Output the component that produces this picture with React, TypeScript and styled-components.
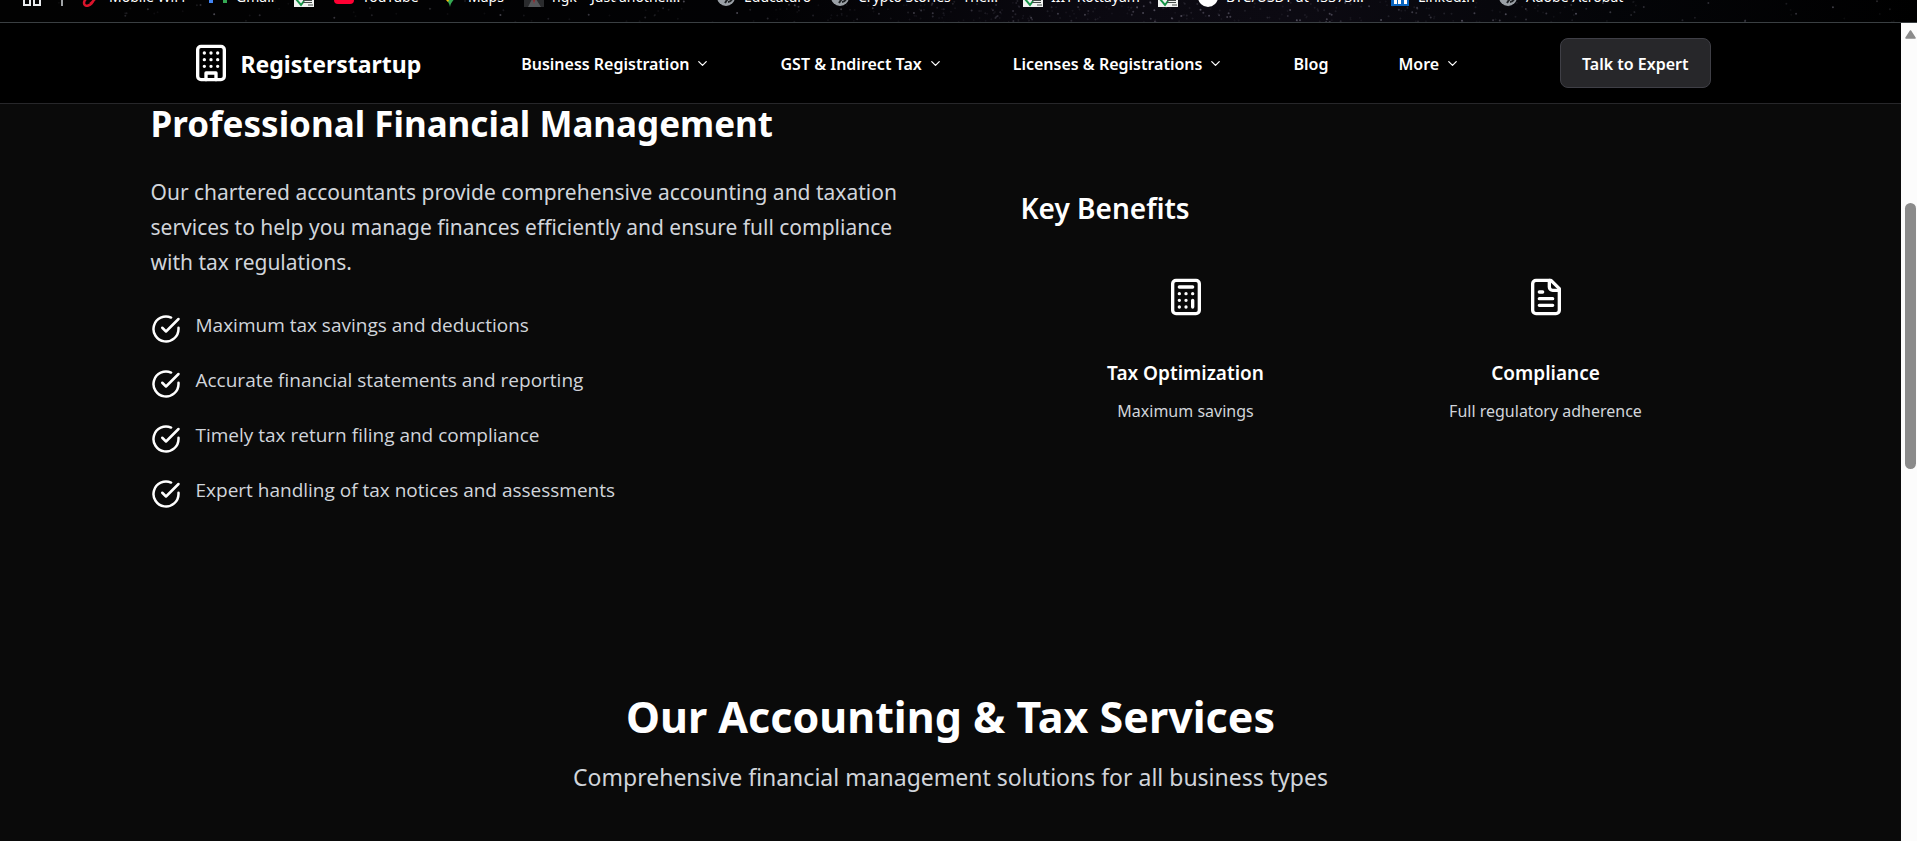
import React from 'react';
import styled, { createGlobalStyle } from 'styled-components';

const GlobalStyle = createGlobalStyle`
  *, *::before, *::after { box-sizing: border-box; }
  html, body { margin: 0; padding: 0; background: #000; }
  body { font-family: "Noto Sans", "Open Sans", sans-serif; color: #fff; overflow: hidden; }
  h1, h2, h3, h4, p, ul { margin: 0; padding: 0; }
  ul { list-style: none; }
  a { color: inherit; text-decoration: none; }
  button { font: inherit; color: inherit; cursor: pointer; }
  svg { display: block; flex: none; }
`;

const Window = styled.div`
  display: flex;
  flex-direction: column;
  height: 100vh;
`;

/* Browser bookmarks strip */
const BookmarksBar = styled.nav`
  position: relative;
  flex: none;
  height: 23px;
  overflow: hidden;
  background: linear-gradient(90deg, #020202 0%, #020204 40%, #0b0911 58%, #0c0a12 68%, #040508 84%, #000 100%);
  border-bottom: 1px solid #3a3f42;
`;

const Starfield = styled.svg`
  position: absolute;
  inset: 0;
  width: 100%;
  height: 100%;
`;

const BookmarkRow = styled.div`
  position: relative;
  display: flex;
  align-items: center;
  height: 20px;
  margin-top: -13px;
  padding-left: 22px;
  font-size: 14px;
  line-height: 20px;
  white-space: nowrap;
`;

const AppsItem = styled.a`
  flex: none;
  width: 39px;
`;

const BarDivider = styled.span`
  flex: none;
  width: 2px;
  height: 18px;
  margin-right: 18px;
  background: #a0a3a6;
`;

const Bookmark = styled.a<{ $width: number }>`
  display: flex;
  align-items: center;
  gap: 8px;
  flex: 0 0 ${(p) => p.$width}px;
`;

/* Page viewport */
const Viewport = styled.div`
  display: flex;
  flex: 1;
  min-height: 0;
`;

const Page = styled.div`
  flex: 1;
  min-width: 0;
  overflow: hidden;
  background: #0a0a0a;
`;

const Header = styled.header`
  background: #000;
  border-bottom: 1px solid #27272a;
`;

const HeaderInner = styled.div`
  display: flex;
  align-items: center;
  justify-content: space-between;
  max-width: 1600px;
  height: 80px;
  margin: 0 auto;
  padding: 0 40px;
`;

const Brand = styled.a`
  display: flex;
  align-items: center;
  gap: 10px;
  font-size: 23px;
  line-height: 35px;
  font-weight: 700;
`;

const BrandName = styled.span`
  padding-top: 3px;
`;

const Menu = styled.nav`
  display: flex;
  align-items: center;
  gap: 70px;
`;

const MenuLabel = styled.span`
  display: block;
  padding-top: 2px;
  font-size: 16px;
  line-height: 24px;
  font-weight: 600;
`;

const MenuButton = styled.button`
  display: flex;
  align-items: center;
  gap: 6px;
  padding: 0;
  border: 0;
  background: none;
`;

const ExpertButton = styled.button`
  height: 50px;
  padding: 0 21px;
  border: 1px solid #3f3f46;
  border-radius: 8px;
  background: #27272a;
`;

const Container = styled.div`
  max-width: 1600px;
  margin: 0 auto;
`;

const Overview = styled(Container)`
  display: grid;
  grid-template-columns: 1fr 1fr;
  gap: 60px;
`;

const Intro = styled.section`
  display: flex;
  flex-direction: column;
`;

const Title = styled.h2`
  font-size: 35px;
  line-height: 40px;
  font-weight: 700;
`;

const Lead = styled.p`
  margin-top: 31px;
  color: #d1d5db;
  font-size: 21px;
  line-height: 35px;
`;

const CheckList = styled.ul`
  display: flex;
  flex-direction: column;
  gap: 21px;
  margin-top: 30px;
`;

const CheckItem = styled.li`
  display: flex;
  align-items: flex-start;
  gap: 15px;
  color: #d1d5db;
  font-family: "Open Sans", "Noto Sans", sans-serif;
  font-size: 19px;
  line-height: 30px;

  svg { margin-top: 4px; color: #fff; }
`;

const Benefits = styled.section`
  padding: 84px 40px 0;
`;

const BenefitsTitle = styled.h3`
  font-size: 28px;
  line-height: 40px;
  font-weight: 600;
`;

const BenefitGrid = styled.div`
  display: grid;
  grid-template-columns: 1fr 1fr;
  gap: 30px;
  margin-top: 29px;
`;

const BenefitCard = styled.article`
  display: flex;
  flex-direction: column;
  align-items: center;
  padding: 20px;
  text-align: center;
`;

const BenefitName = styled.h4`
  margin-top: 39px;
  font-size: 19px;
  line-height: 35px;
  font-weight: 600;
`;

const BenefitNote = styled.p`
  margin-top: 5px;
  color: #d1d5db;
  font-size: 16px;
  line-height: 30px;
`;

const Services = styled(Container)`
  margin-top: 180px;
  text-align: center;
`;

const ServicesTitle = styled.h2`
  font-size: 43px;
  line-height: 55px;
  font-weight: 700;
`;

const ServicesNote = styled.p`
  margin-top: 16px;
  color: #d1d5db;
  font-size: 23px;
  line-height: 35px;
`;

/* Scrollbar */
const ScrollTrack = styled.div`
  display: flex;
  flex-direction: column;
  flex: none;
  width: 16px;
  padding: 7px 1px 0 4px;
  background: #fcfcfc;
`;

const ScrollThumb = styled.div`
  width: 11px;
  height: 40%;
  max-height: 266px;
  margin-top: 164px;
  border-radius: 6px;
  background: #8b8b8b;
`;

type LineIconProps = { size: number; children: React.ReactNode };

const LineIcon = ({ size, children }: LineIconProps) => (
  <svg width={size} height={size} viewBox="0 0 24 24" fill="none" stroke="currentColor" strokeWidth="2" strokeLinecap="round" strokeLinejoin="round" aria-hidden="true">
    {children}
  </svg>
);

const BuildingIcon = () => (
  <LineIcon size={40}>
    <rect width="16" height="20" x="4" y="2" rx="2" />
    <path d="M9 22v-4h6v4M8 6h.01M16 6h.01M12 6h.01M12 10h.01M12 14h.01M16 10h.01M16 14h.01M8 10h.01M8 14h.01" />
  </LineIcon>
);

const ChevronIcon = () => (
  <LineIcon size={15}>
    <path d="m6 9 6 6 6-6" />
  </LineIcon>
);

const CheckIcon = () => (
  <LineIcon size={30}>
    <path d="M22 11.08V12a10 10 0 1 1-5.93-9.14" />
    <path d="m9 11 3 3L22 4" />
  </LineIcon>
);

const CalculatorIcon = () => (
  <LineIcon size={40}>
    <rect width="16" height="20" x="4" y="2" rx="2" />
    <path d="M8 6h8M16 14v4M16 10h.01M12 10h.01M8 10h.01M12 14h.01M8 14h.01M12 18h.01M8 18h.01" />
  </LineIcon>
);

const DocumentIcon = () => (
  <LineIcon size={40}>
    <path d="M15 2H6a2 2 0 0 0-2 2v16a2 2 0 0 0 2 2h12a2 2 0 0 0 2-2V7Z" />
    <path d="M14 2v4a2 2 0 0 0 2 2h4M10 9H8M16 13H8M16 17H8" />
  </LineIcon>
);

const favicons: Record<string, React.ReactNode> = {
  scribble: <path d="M16 9c-5-3-13 3-13 7 0 5 8 3 10-4M9 17c4-3 5-6 8-8" fill="none" stroke="#d9142b" strokeWidth="2.500" />,
  gmail: (
    <>
      <path d="M1 3h4v13H1z" fill="#4285f4" />
      <path d="M15 3h4v13h-4z" fill="#34a853" />
      <path d="M1 3l9 5 9-5v3l-9 6-9-6z" fill="#ea4335" />
    </>
  ),
  crest: (
    <>
      <path d="M0 0h20v20H0z" fill="#f1f3f1" />
      <path d="M2 12l5 6 3-4" fill="none" stroke="#159447" strokeWidth="2" />
      <path d="M9 13.500h9M9 15.500h9M14 18h5" stroke="#444b48" strokeWidth="1" />
    </>
  ),
  youtube: <rect y="2" width="20" height="15" rx="4" fill="#ff0033" />,
  maps: (
    <>
      <path d="M3 6a7 7 0 0 1 14 0c0 6-6 7-7 14-1-7-7-8-7-14" fill="#34a853" />
      <path d="M3 10l5 5 3-6z" fill="#fbbc04" />
    </>
  ),
  portrait: (
    <>
      <path d="M0 0h20v20H0z" fill="#2a2b2d" />
      <path d="M4 20l4-8 2 3 2-3 5 8" fill="#55575a" />
      <path d="M9 12h2l-1 5z" fill="#b3262d" />
    </>
  ),
  globe: (
    <>
      <circle cx="10" cy="10" r="9" fill="#9aa0a6" />
      <path d="M4 8c1 3 5 3 7 5l-2 3M12 15c2 0 4-2 5-5" fill="none" stroke="#202326" strokeWidth="2" />
    </>
  ),
  disc: <circle cx="10" cy="10" r="10" fill="#fff" />,
  linkedin: (
    <>
      <rect x="1" y="1" width="18" height="18" fill="#0a66c2" />
      <path d="M5.500 8v9M9.500 8v9M9.500 12c1-4 6-4 6 0v5" fill="none" stroke="#fff" strokeWidth="3" />
    </>
  ),
};

const bookmarks: { icon: string; label?: string; title?: string; width: number }[] = [
  { icon: 'scribble', label: 'Mobile WiFi', width: 127 },
  { icon: 'gmail', label: 'Gmail', width: 86 },
  { icon: 'crest', title: 'Institute portal', width: 40 },
  { icon: 'youtube', label: 'YouTube', width: 106 },
  { icon: 'maps', label: 'Maps', width: 84 },
  { icon: 'portrait', label: 'ngk – Just another...', width: 192 },
  { icon: 'globe', label: 'Educaturo', width: 114 },
  { icon: 'globe', label: 'Crypto Stories - The...', width: 193 },
  { icon: 'crest', label: 'IIIT Kottayam', width: 135 },
  { icon: 'crest', title: 'Institute portal', width: 40 },
  { icon: 'disc', label: 'BTC/USDT at 43373...', width: 192 },
  { icon: 'linkedin', label: 'LinkedIn', width: 108 },
  { icon: 'globe', label: 'Adobe Acrobat', width: 130 },
];

// Pseudo-random, but the same stars on every render.
const stars = Array.from({ length: 420 }, (_, i) => {
  const rand = (n: number) => {
    const v = Math.sin(i * 12.9898 + n * 78.233) * 43758.5453;
    return v - Math.floor(v);
  };
  const spread = i % 3 === 0 ? rand(1) : 0.5 + (rand(1) + rand(4) - 1) * 0.3 + 0.1;
  return { x: spread * 100, y: rand(2) * 22, alpha: 0.06 + rand(3) ** 4 * 0.3 };
});

const menu = [
  { label: 'Business Registration', dropdown: true },
  { label: 'GST & Indirect Tax', dropdown: true },
  { label: 'Licenses & Registrations', dropdown: true },
  { label: 'Blog', dropdown: false },
  { label: 'More', dropdown: true },
];

const points = [
  'Maximum tax savings and deductions',
  'Accurate financial statements and reporting',
  'Timely tax return filing and compliance',
  'Expert handling of tax notices and assessments',
];

const benefits = [
  { name: 'Tax Optimization', note: 'Maximum savings', icon: <CalculatorIcon /> },
  { name: 'Compliance', note: 'Full regulatory adherence', icon: <DocumentIcon /> },
];

export default function App() {
  return (
    <Window>
      <GlobalStyle />
      <BookmarksBar aria-label="Bookmarks">
        <Starfield aria-hidden="true">
          {stars.map((s, i) => (
            <rect key={i} x={`${s.x}%`} y={s.y} width="2" height="2" rx="1" fill="#c9c4dc" opacity={s.alpha} />
          ))}
        </Starfield>
        <BookmarkRow>
          <AppsItem href="#" aria-label="Apps">
            <svg width="20" height="20" viewBox="0 0 20 20" fill="none" stroke="#e8eaed" strokeWidth="2" aria-hidden="true">
              <path d="M2 2h6v6H2zM12 2h6v6h-6zM2 12h6v6H2zM12 12h6v6h-6z" />
            </svg>
          </AppsItem>
          <BarDivider />
          {bookmarks.map((b, i) => (
            <Bookmark key={i} href="#" $width={b.width} aria-label={b.label ?? b.title}>
              <svg width="20" height="20" viewBox="0 0 20 20" aria-hidden="true">{favicons[b.icon]}</svg>
              {b.label}
            </Bookmark>
          ))}
        </BookmarkRow>
      </BookmarksBar>

      <Viewport>
        <Page>
          <Header>
            <HeaderInner>
              <Brand href="#">
                <BuildingIcon />
                <BrandName>Registerstartup</BrandName>
              </Brand>
              <Menu aria-label="Main">
                {menu.map((m) =>
                  m.dropdown ? (
                    <MenuButton key={m.label} type="button" aria-haspopup="true">
                      <MenuLabel>{m.label}</MenuLabel>
                      <ChevronIcon />
                    </MenuButton>
                  ) : (
                    <a key={m.label} href="#">
                      <MenuLabel>{m.label}</MenuLabel>
                    </a>
                  ),
                )}
              </Menu>
              <ExpertButton type="button">
                <MenuLabel>Talk to Expert</MenuLabel>
              </ExpertButton>
            </HeaderInner>
          </Header>

          <main>
            <Overview>
              <Intro>
                <Title>Professional Financial Management</Title>
                <Lead>
                  Our chartered accountants provide comprehensive accounting and taxation services to help you manage
                  finances efficiently and ensure full compliance with tax regulations.
                </Lead>
                <CheckList>
                  {points.map((p) => (
                    <CheckItem key={p}>
                      <CheckIcon />
                      {p}
                    </CheckItem>
                  ))}
                </CheckList>
              </Intro>
              <Benefits>
                <BenefitsTitle>Key Benefits</BenefitsTitle>
                <BenefitGrid>
                  {benefits.map((b) => (
                    <BenefitCard key={b.name}>
                      {b.icon}
                      <BenefitName>{b.name}</BenefitName>
                      <BenefitNote>{b.note}</BenefitNote>
                    </BenefitCard>
                  ))}
                </BenefitGrid>
              </Benefits>
            </Overview>

            <Services as="section">
              <ServicesTitle>Our Accounting &amp; Tax Services</ServicesTitle>
              <ServicesNote>Comprehensive financial management solutions for all business types</ServicesNote>
            </Services>
          </main>
        </Page>

        <ScrollTrack aria-hidden="true">
          <svg width="11" height="9" viewBox="0 0 11 9">
            <path d="M5.500 1 10 8H1z" fill="#8b8b8b" stroke="#8b8b8b" strokeWidth="1.500" strokeLinejoin="round" />
          </svg>
          <ScrollThumb />
        </ScrollTrack>
      </Viewport>
    </Window>
  );
}
